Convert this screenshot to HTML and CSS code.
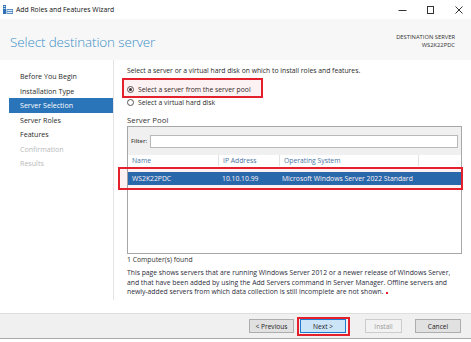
FILE: index.html
```html
<!DOCTYPE html>
<html lang="en">

<head>
    <meta charset="utf-8">
    <title>Add Roles and Features Wizard</title>
    <link rel="stylesheet" href="styles.css">
</head>

<body>
    <div class="window">
        <div class="titlebar">
            <svg class="app-icon" width="10" height="9" viewBox="0 0 10 9">
                <rect x="0" y="0" width="3" height="9" fill="#2f6fb3"/>
                <rect x="0.6" y="1" width="1.8" height="1" fill="#cfe3f6"/>
                <rect x="0.6" y="3" width="1.8" height="1" fill="#cfe3f6"/>
                <rect x="3.5" y="4" width="6.5" height="5" fill="#5b8fc4"/>
                <rect x="4.3" y="5" width="4.9" height="1" fill="#e6f0fa"/>
                <rect x="4.3" y="7" width="4.9" height="1" fill="#e6f0fa"/>
            </svg>
            <span class="title">Add Roles and Features Wizard</span>
            <div class="controls">
                <svg width="10" height="10" viewBox="0 0 10 10"><path d="M0.5 5.5h8" stroke="#333" stroke-width="1"/></svg>
                <svg width="10" height="10" viewBox="0 0 10 10"><rect x="1.5" y="1.5" width="6" height="7" fill="none" stroke="#333" stroke-width="1"/></svg>
                <svg width="10" height="10" viewBox="0 0 10 10"><path d="M1.5 1.5l7 7M8.5 1.5l-7 7" stroke="#333" stroke-width="1"/></svg>
            </div>
        </div>

        <header class="header">
            <h1>Select destination server</h1>
            <div class="dest">
                <div>DESTINATION SERVER</div>
                <div>WS2K22PDC</div>
            </div>
        </header>

        <div class="main">
            <nav class="steps">
                <div class="step">Before You Begin</div>
                <div class="step">Installation Type</div>
                <div class="step active">Server Selection</div>
                <div class="step">Server Roles</div>
                <div class="step">Features</div>
                <div class="step off">Confirmation</div>
                <div class="step off">Results</div>
            </nav>

            <section class="content">
                <p class="intro">Select a server or a virtual hard disk on which to install roles and features.</p>
                <div class="option first"><span class="radio checked"></span>Select a server from the server pool</div>
                <div class="option"><span class="radio"></span>Select a virtual hard disk</div>

                <div class="pool-label">Server Pool</div>
                <div class="pool">
                    <div class="filter">
                        <span class="filter-label">Filter:</span>
                        <div class="filter-input"></div>
                    </div>
                    <div class="cols">
                        <div class="col c-name">Name</div>
                        <div class="col c-ip">IP Address</div>
                        <div class="col c-os">Operating System</div>
                        <div class="col c-rest"></div>
                    </div>
                    <div class="rows">
                        <div class="row selected">
                            <div class="c-name">WS2K22PDC</div>
                            <div class="c-ip">10.10.10.99</div>
                            <div class="c-os">Microsoft Windows Server 2022 Standard</div>
                        </div>
                    </div>
                </div>
                <div class="count">1 Computer(s) found</div>
                <p class="note">This page shows servers that are running Windows Server 2012 or a newer release of Windows Server,
                    and that have been added by using the Add Servers command in Server Manager. Offline servers and
                    newly-added servers from which data collection is still incomplete are not shown.<span class="dot"></span></p>
            </section>
        </div>

        <footer class="footer">
            <button class="btn prev">&lt; Previous</button>
            <button class="btn next">Next &gt;</button>
            <button class="btn install" disabled>Install</button>
            <button class="btn cancel">Cancel</button>
        </footer>

        <div class="mark mark-radio"></div>
        <div class="mark mark-row"></div>
        <div class="mark mark-next"></div>
    </div>
</body>

</html>
```

FILE: styles.css
```css
body {
    margin: 0;
    background: #ffffff;
    font-family: 'Open Sans', 'Liberation Sans', sans-serif;
    color: #222222;
}

.window {
    position: relative;
    width: 471px;
    height: 342px;
    overflow: hidden;
    background: #ffffff;
}

/* title bar */
.titlebar {
    height: 19px;
    display: flex;
    align-items: center;
    padding-left: 3px;
}

.app-icon {
    margin-right: 3px;
}

.title {
    font-size: 6.8px;
    color: #111111;
}

.controls {
    margin-left: auto;
    display: flex;
    gap: 18px;
    padding-right: 7px;
}

/* header */
.header {
    height: 41px;
    background: #f7f7f7;
    display: flex;
    justify-content: space-between;
}

.header h1 {
    margin: 14px 0 0 10px;
    font-weight: 300;
    font-size: 13.4px;
    line-height: 18px;
    letter-spacing: -0.1px;
    color: #3a8fc7;
}

.dest {
    margin: 15px 16px 0 0;
    font-size: 5.8px;
    line-height: 7.5px;
    text-align: right;
    color: #333333;
}

/* body */
.main {
    height: 253px;
    display: flex;
}

.steps {
    width: 104px;
    height: 231px;
    padding: 9px 0 0 9px;
    border-right: 1px solid #e4e4e4;
    flex-shrink: 0;
}

.step {
    height: 14.5px;
    line-height: 14.5px;
    padding-left: 11px;
    font-size: 7.1px;
    color: #2a2a2a;
}

.step.active {
    background: #2a74b9;
    color: #ffffff;
}

.step.off {
    color: #b9b9b9;
}

.content {
    flex: 1;
    padding: 6px 10px 0 13px;
    font-size: 6.8px;
    color: #2a2a2a;
}

.intro {
    margin: 0;
    line-height: 10px;
}

.option {
    display: flex;
    align-items: center;
    height: 10px;
    margin-top: 3px;
}

.option.first {
    margin-top: 8px;
}

.radio {
    width: 5px;
    height: 5px;
    border: 1px solid #555555;
    border-radius: 50%;
    margin: 0 4px 0 0;
    box-sizing: content-box;
    position: relative;
}

.radio.checked::after {
    content: "";
    position: absolute;
    left: 1px;
    top: 1px;
    width: 3px;
    height: 3px;
    border-radius: 50%;
    background: #333333;
}

.pool-label {
    margin-top: 8px;
    font-size: 7.8px;
    line-height: 11px;
    color: #333333;
}

.pool {
    height: 128px;
    border: 1px solid #a7a7a7;
    box-sizing: border-box;
    margin-right: -1px;
}

.filter {
    height: 28px;
    background: #f0f0f0;
    display: flex;
    align-items: center;
    padding: 0 3px;
    gap: 3px;
    font-size: 5.8px;
    color: #444444;
}

.filter-label {
    font-weight: 600;
}

.filter-input {
    flex: 1;
    height: 13px;
    background: #ffffff;
    border: 1px solid #b8b8b8;
    box-sizing: border-box;
}

.cols {
    display: flex;
    height: 11px;
    line-height: 11px;
    color: #4a73a3;
}

.col {
    padding-left: 4px;
    border-right: 1px solid #e2e2e2;
}

.c-name {
    width: 86px;
}

.c-ip {
    width: 56px;
}

.c-os {
    width: 134px;
}

.c-rest {
    flex: 1;
    border-right: none;
}

.rows {
    padding-top: 6px;
}

.row {
    display: flex;
    height: 13px;
    line-height: 13px;
}

.row div {
    padding-left: 4px;
}

.row.selected {
    background: #1f6db4;
    color: #ffffff;
}

.count {
    margin-top: 1px;
    line-height: 10px;
    color: #333333;
}

.note {
    margin: 3px 0 0 0;
    line-height: 9.7px;
    color: #2b2b3a;
}

.dot {
    display: inline-block;
    width: 2px;
    height: 2px;
    margin-left: 2px;
    background: #e4202c;
}

/* footer */
.footer {
    height: 26px;
    background: #f0f0f0;
    border-top: 1px solid #dedede;
    border-bottom: 1px solid #a9a9a9;
    display: flex;
    align-items: center;
    justify-content: flex-end;
    padding-right: 10px;
    box-sizing: border-box;
}

.btn {
    height: 14px;
    padding: 0;
    font-family: 'Open Sans', 'Liberation Sans', sans-serif;
    font-size: 6.6px;
    color: #222222;
    background: #e1e1e1;
    border: 1px solid #adadad;
}

.prev {
    width: 45px;
}

.next {
    width: 46px;
    margin-left: 6px;
    background: #cce4f7;
    border-color: #1f7ad0;
}

.install {
    width: 37px;
    margin-left: 19px;
    background: #f2f2f2;
    border-color: #cccccc;
    color: #9a9a9a;
}

.cancel {
    width: 46px;
    margin-left: 13px;
}

/* red annotation boxes */
.mark {
    position: absolute;
    border: 2px solid #e4202c;
    background: rgba(228, 32, 44, 0.06);
    box-sizing: border-box;
}

.mark-radio {
    left: 122px;
    top: 78px;
    width: 141px;
    height: 20px;
}

.mark-row {
    left: 118px;
    top: 167px;
    width: 345px;
    height: 23px;
}

.mark-next {
    left: 297px;
    top: 317px;
    width: 53px;
    height: 19px;
    background: none;
}
```
